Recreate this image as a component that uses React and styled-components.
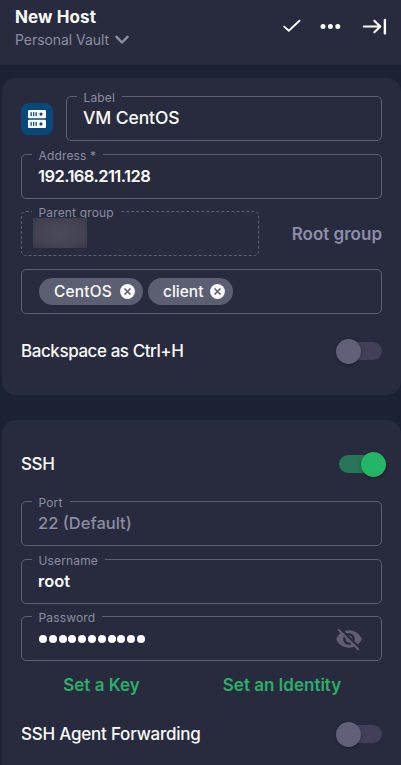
import React from "react";
import styled, { createGlobalStyle } from "styled-components";

const GlobalStyle = createGlobalStyle`
  * { box-sizing: border-box; }
  body {
    margin: 0;
    background: #1d2134;
    color: #fff;
    font-family: Inter, "Liberation Sans", sans-serif;
    overflow: hidden;
  }
  button { border: 0; padding: 0; background: none; color: inherit; font: inherit; }
`;

const Screen = styled.main`
  width: 401px;
  height: 765px;
  overflow: hidden;
  display: flex;
  flex-direction: column;
`;

const Header = styled.header`
  height: 65px;
  flex: none;
  display: flex;
  justify-content: space-between;
  padding: 6px 14px 0 15px;
  background: #282b3d;
`;

const Title = styled.h1`
  margin: 0;
  font-size: 17px;
  line-height: 22px;
  font-weight: 700;
  letter-spacing: 0.1px;
`;

const Vault = styled.button`
  display: flex;
  align-items: center;
  gap: 6px;
  height: 23px;
  font-size: 14px;
  letter-spacing: -0.05px;
  color: #8c8da0;
`;

const Actions = styled.div`
  display: flex;
  align-items: center;
  height: 40px;
`;

const IconButton = styled.button`
  display: flex;
  margin-left: ${(p) => p.$gap}px;
`;

const Panel = styled.section`
  flex: none;
  margin: ${(p) => p.$top}px 0 0 2px;
  height: ${(p) => p.$height}px;
  padding: ${(p) => p.$pad}px 19px 0;
  border-radius: 14px;
  background: #282b3d;
`;

const Row = styled.div`
  display: flex;
  align-items: center;
  justify-content: space-between;
  margin-top: ${(p) => p.$top || 0}px;
`;

const HostBadge = styled.div`
  width: 32px;
  height: 32px;
  border-radius: 8px;
  background: #04497a;
  display: flex;
  align-items: center;
  justify-content: center;
`;

const FieldBox = styled.div`
  position: relative;
  display: flex;
  align-items: center;
  justify-content: space-between;
  width: ${(p) => p.$width || 361}px;
  height: 45px;
  margin-top: ${(p) => p.$top || 0}px;
  padding: 0 18px 0 16px;
  border: 1px ${(p) => (p.$dashed ? "dashed" : "solid")} #5e6072;
  border-radius: 5px;
`;

const FloatingLabel = styled.label`
  position: absolute;
  left: 10px;
  top: -7px;
  padding: 0 7px 0 6.5px;
  background: #282b3d;
  color: #8c8da0;
  font-size: 12px;
  line-height: 16px;
  letter-spacing: 0.15px;
`;

const Value = styled.span`
  padding-bottom: 2px;
  font-size: ${(p) => p.$size || 16.5}px;
  line-height: 20px;
  font-weight: ${(p) => p.$weight || 500};
  letter-spacing: ${(p) => p.$track || "0"};
  color: ${(p) => (p.$muted ? "#8c8da0" : "#fff")};
`;

const RedactedName = styled.div`
  position: absolute;
  left: 11px;
  top: 6px;
  width: 54px;
  height: 30px;
  background: radial-gradient(ellipse at center, #4b4a5b 0%, #434353 60%, #393a4b 100%);
`;

const TextButton = styled.button`
  font-size: 17px;
  line-height: 22px;
  font-weight: 600;
  color: ${(p) => (p.$accent ? "#2aae6b" : "#8c8da8")};
`;

const Chips = styled.div`
  display: flex;
  gap: 5px;
  margin-left: 1px;
`;

const Chip = styled.span`
  display: flex;
  align-items: center;
  justify-content: space-between;
  width: ${(p) => p.$width}px;
  height: 27px;
  padding: 0 8px 1px 15px;
  border-radius: 14px;
  background: #5c5e72;
  font-size: 15.5px;
  font-weight: 500;
  letter-spacing: ${(p) => p.$track};
`;

const Caption = styled.span`
  font-size: 17px;
  line-height: 22px;
  font-weight: 500;
  letter-spacing: ${(p) => p.$track || "0"};
`;

const Switch = styled.button`
  display: flex;
  align-items: center;
  justify-content: ${(p) => (p.$on ? "flex-end" : "flex-start")};
  width: ${(p) => (p.$on ? 43 : 42)}px;
  height: 18px;
  border-radius: 9px;
  background: ${(p) => (p.$on ? "#277556" : "#404157")};
`;

const Knob = styled.span`
  flex: none;
  width: 25px;
  height: 25px;
  margin: ${(p) => (p.$on ? "0 -4px 0 0" : "0 0 0 -4px")};
  border-radius: 50%;
  background: ${(p) => (p.$on ? "#25b567" : "#606176")};
  box-shadow: 0 1px 3px rgba(0, 0, 0, 0.35);
`;

const Dots = styled.span`
  display: flex;
  gap: 1.8px;
  margin-left: 1px;
`;

const Dot = styled.i`
  width: 8px;
  height: 8px;
  border-radius: 50%;
  background: #fff;
`;

const Links = styled.div`
  display: grid;
  grid-template-columns: 161px 200px;
  justify-items: center;
  margin-top: 13px;
`;

function Field({ label, value, width, top, dashed, muted, track, weight, size, children }) {
  return (
    <FieldBox $width={width} $top={top} $dashed={dashed}>
      {label && <FloatingLabel>{label}</FloatingLabel>}
      {value && <Value $muted={muted} $track={track} $weight={weight} $size={size}>{value}</Value>}
      {children}
    </FieldBox>
  );
}

function Toggle({ on }) {
  return (
    <Switch $on={on} role="switch" aria-checked={!!on}>
      <Knob $on={on} />
    </Switch>
  );
}

function Tag({ children, width, track }) {
  return (
    <Chip $width={width} $track={track}>
      {children}
      <svg width="15" height="15" viewBox="0 0 15 15">
        <circle cx="7.5" cy="7.5" r="7.4" fill="#fff" />
        <path d="M4.5 4.5 10.5 10.5M10.5 4.5 4.5 10.5" stroke="#5c5e72" strokeWidth="1.6" />
      </svg>
    </Chip>
  );
}

function ServerIcon() {
  return (
    <svg width="18" height="18" viewBox="0 0 18 18">
      <rect width="18" height="8.2" rx="1.2" fill="#fff" />
      <rect y="9.8" width="18" height="8.2" rx="1.2" fill="#fff" />
      <g fill="#04497a">
        {[0, 9.8].map((y) => (
          <React.Fragment key={y}>
            <rect x="2.5" y={y + 2.2} width="1.3" height="3.8" />
            <rect x="5" y={y + 2.2} width="1.3" height="3.8" />
            <rect x="7.5" y={y + 2.2} width="1.3" height="3.8" />
            <circle cx="13" cy={y + 4.1} r="1.6" />
          </React.Fragment>
        ))}
      </g>
    </svg>
  );
}

export default function App() {
  return (
    <Screen>
      <GlobalStyle />
      <Header>
        <div>
          <Title>New Host</Title>
          <Vault>
            Personal Vault
            <svg width="14" height="10" viewBox="0 0 14 10" fill="none">
              <path d="M1.5 1.8 7 7.5l5.5-5.7" stroke="#8c8da0" strokeWidth="2.4" strokeLinecap="round" strokeLinejoin="round" />
            </svg>
          </Vault>
        </div>
        <Actions>
          <IconButton $gap={0}>
            <svg width="18" height="14" viewBox="0 0 18 14" fill="none">
              <path d="m1.2 7.6 4.6 4.2L16.5 1.7" stroke="#fff" strokeWidth="1.9" strokeLinecap="round" />
            </svg>
          </IconButton>
          <IconButton $gap={19}>
            <svg width="21" height="6" viewBox="0 0 21 6" fill="#fff">
              <circle cx="3" cy="3.4" r="2.5" />
              <circle cx="10.4" cy="3.4" r="2.5" />
              <circle cx="17.8" cy="3.4" r="2.5" />
            </svg>
          </IconButton>
          <IconButton $gap={21}>
            <svg width="25" height="17" viewBox="0 0 25 17" fill="none" stroke="#fff" strokeLinecap="round" strokeLinejoin="round">
              <path d="M1.8 8.5H18M12.3 2.7l6 5.8-6 5.8" strokeWidth="2.1" />
              <path d="M22.9 2v13.4" strokeWidth="2.4" />
            </svg>
          </IconButton>
        </Actions>
      </Header>

      <Panel $top={13} $height={317} $pad={18}>
        <Row>
          <HostBadge><ServerIcon /></HostBadge>
          <Field label="Label" value="VM CentOS" width={316} size={17.5} track="-0.1px" />
        </Row>
        <Field label="Address *" value="192.168.211.128" top={13} track="-0.55px" weight={600} />
        <Row $top={12}>
          <Field label="Parent group" width={238} dashed>
            <RedactedName />
          </Field>
          <TextButton>Root group</TextButton>
        </Row>
        <Field top={13}>
          <Chips>
            <Tag width={104} track="0.15px">CentOS</Tag>
            <Tag width={85} track="0">client</Tag>
          </Chips>
        </Field>
        <Row $top={26}>
          <Caption $track="-0.43px">Backspace as Ctrl+H</Caption>
          <Toggle />
        </Row>
      </Panel>

      <Panel $top={25} $height={360} $pad={33}>
        <Row>
          <Caption $track="-0.4px">SSH</Caption>
          <Toggle on />
        </Row>
        <Field label="Port" value="22 (Default)" top={26} muted />
        <Field label="Username" value="root" top={13} weight={600} />
        <Field label="Password" top={12}>
          <Dots>{Array.from({ length: 11 }, (_, i) => <Dot key={i} />)}</Dots>
          <svg width="28" height="28" viewBox="0 0 24 24" fill="#5e6072">
            <path d="M12 7c2.76 0 5 2.24 5 5 0 .65-.13 1.26-.36 1.83l2.92 2.92c1.51-1.26 2.7-2.89 3.43-4.75-1.73-4.39-6-7.5-11-7.5-1.4 0-2.74.25-3.98.7l2.16 2.16C10.74 7.13 11.35 7 12 7zM2 4.27l2.28 2.28.46.46C3.08 8.3 1.78 10.02 1 12c1.73 4.39 6 7.5 11 7.5 1.55 0 3.03-.3 4.38-.84l.42.42L19.73 22 21 20.73 3.27 3 2 4.27zM7.53 9.8l1.55 1.55c-.05.21-.08.43-.08.65 0 1.66 1.34 3 3 3 .22 0 .44-.03.65-.08l1.55 1.55c-.67.33-1.41.53-2.2.53-2.76 0-5-2.24-5-5 0-.79.2-1.53.53-2.2zm4.31-.78 3.15 3.15.02-.16c0-1.66-1.34-3-3-3l-.17.01z" />
          </svg>
        </Field>
        <Links>
          <TextButton $accent>Set a Key</TextButton>
          <TextButton $accent>Set an Identity</TextButton>
        </Links>
        <Row $top={27}>
          <Caption $track="-0.22px">SSH Agent Forwarding</Caption>
          <Toggle />
        </Row>
      </Panel>
    </Screen>
  );
}
